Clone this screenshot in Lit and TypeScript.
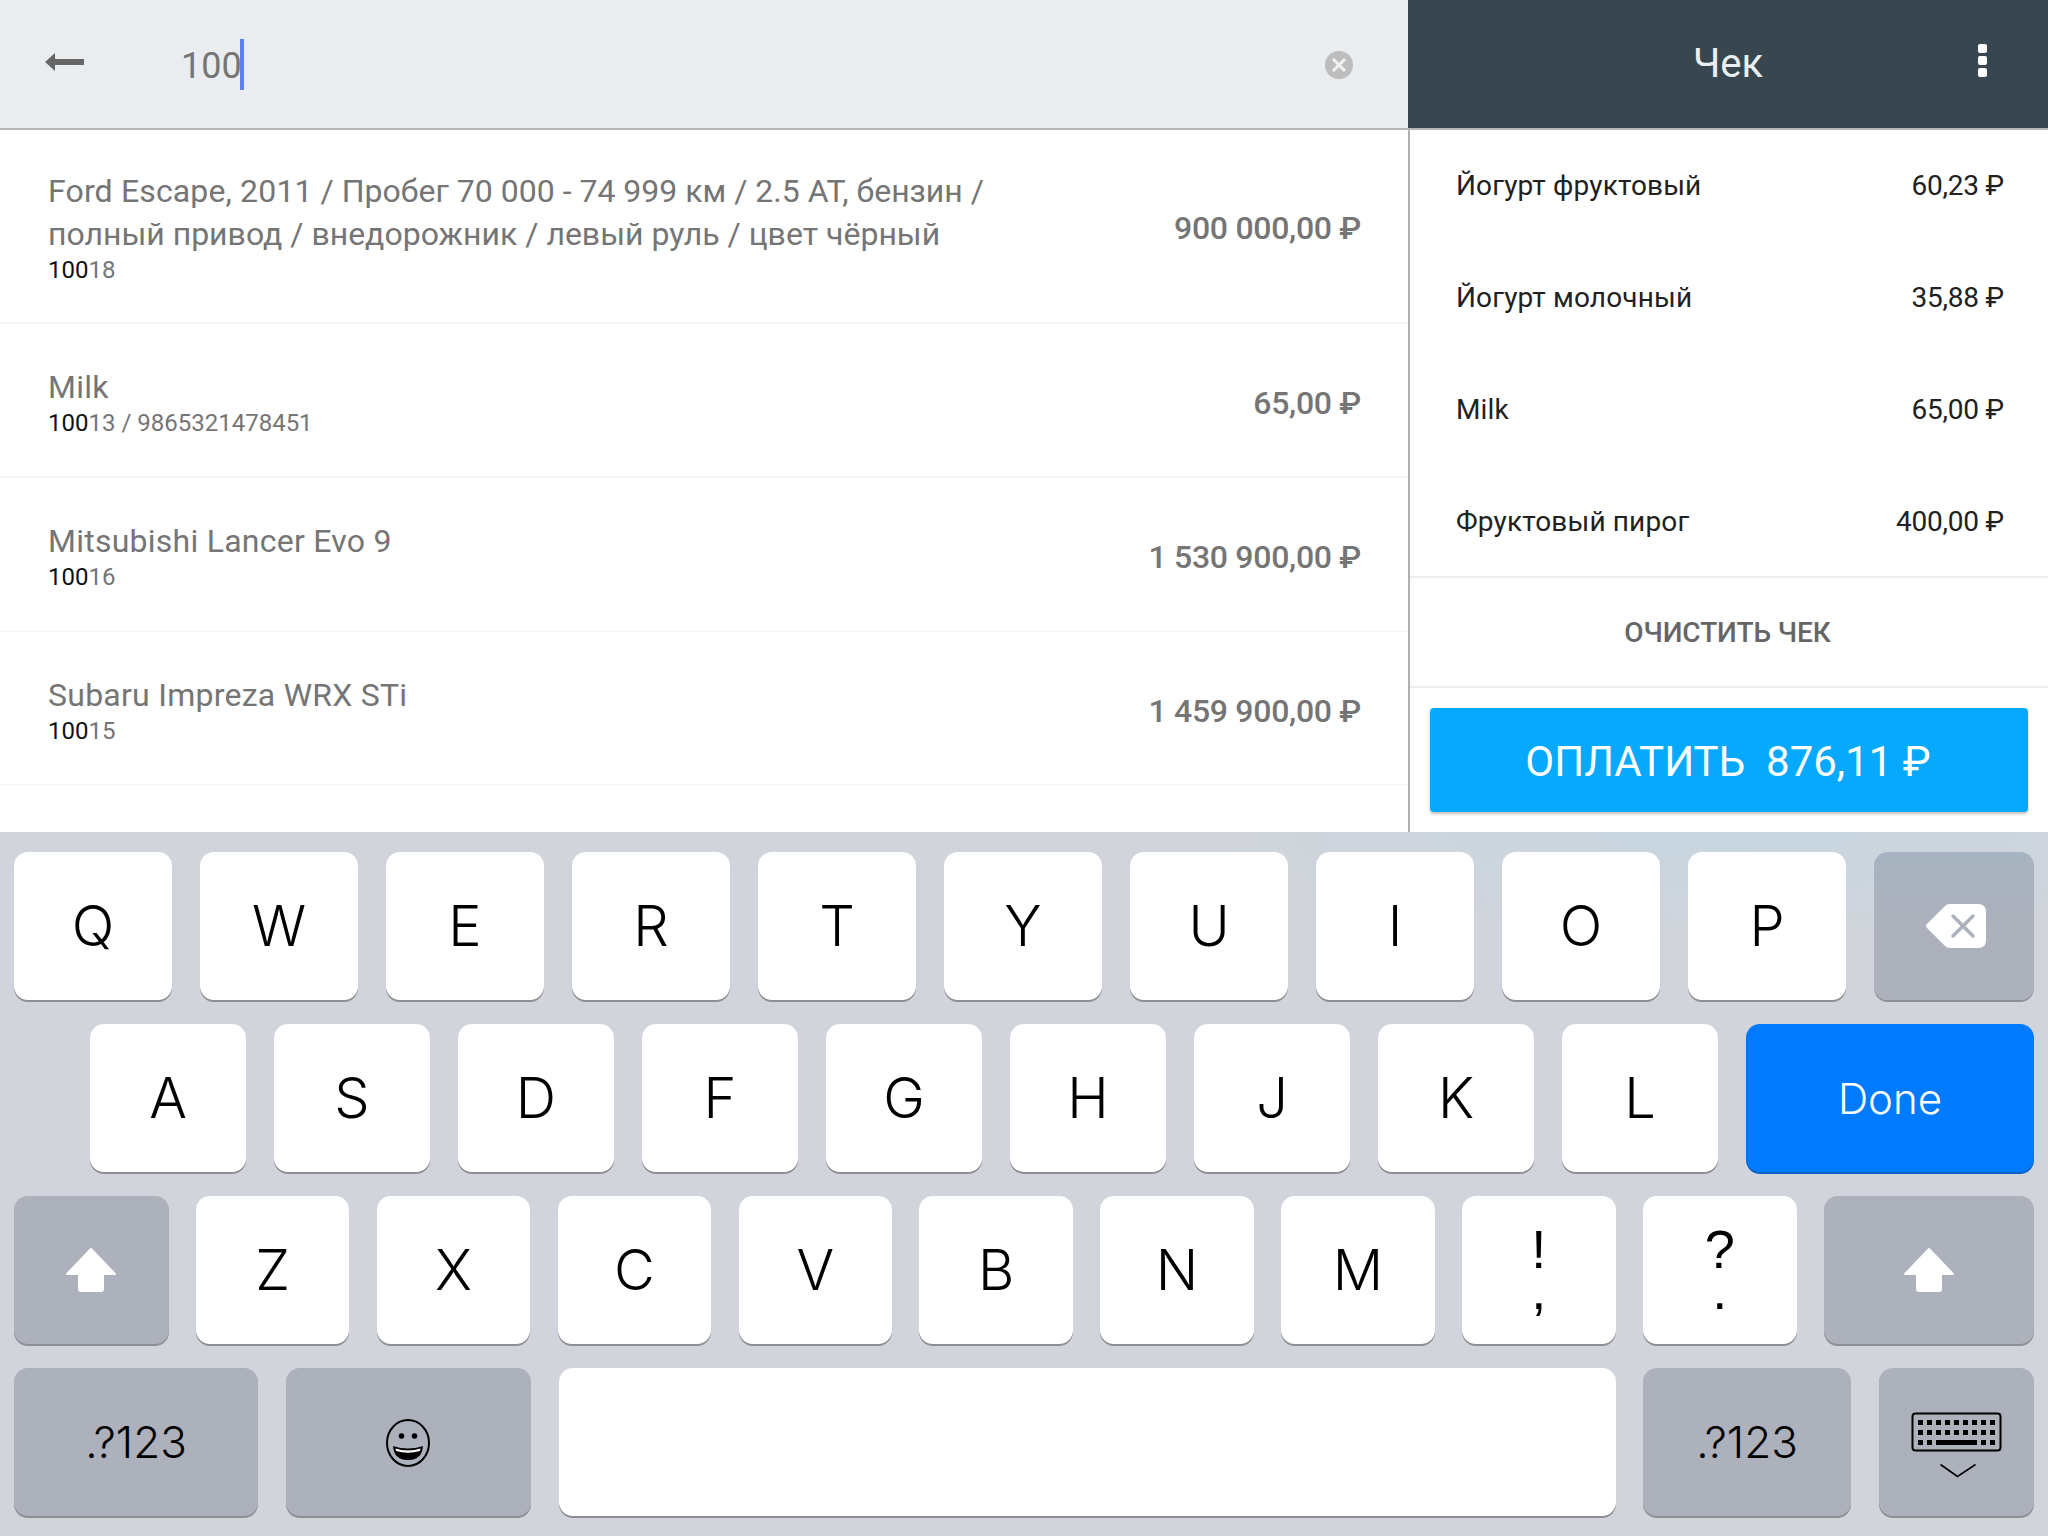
import { LitElement, html, css, svg } from 'lit';
import { customElement } from 'lit/decorators.js';

const products = [
  { lead: 'Ford Escape, 2011', name: ' / Пробег 70 000 - 74 999 км / 2.5 АТ, бензин /', rest: 'полный привод / внедорожник / левый руль / цвет чёрный', code: '18', price: '900 000,00 ₽', tall: true },
  { name: 'Milk', code: '13 / 9865321478451', price: '65,00 ₽', latin: true },
  { name: 'Mitsubishi Lancer Evo 9', code: '16', price: '1 530 900,00 ₽', latin: true },
  { name: 'Subaru Impreza WRX STi', code: '15', price: '1 459 900,00 ₽', latin: true },
];

const receipt = [
  ['Йогурт фруктовый', '60,23 ₽'],
  ['Йогурт молочный', '35,88 ₽'],
  ['Milk', '65,00 ₽'],
  ['Фруктовый пирог', '400,00 ₽'],
];

const shiftIcon = html`<svg width="52" height="46" viewBox="0 0 52 46">
  <path fill="#fff" stroke="#fff" stroke-width="2" stroke-linejoin="round" d="M26 2 L50 27 H38 V42 Q38 44 36 44 H16 Q14 44 14 42 V27 H2 Z" />
</svg>`;

const backspaceIcon = html`<svg class="backspace" width="60" height="44" viewBox="0 0 60 44">
  <path fill="#fff" d="M1 20 L19 2 Q21 0 24 0 H52 Q60 0 60 8 V36 Q60 44 52 44 H24 Q21 44 19 42 L1 24 Q-1 22 1 20 Z" />
  <path fill="none" stroke="#acb1bc" stroke-width="3.5" stroke-linecap="round" d="M27 12 L47 32 M47 12 L27 32" />
</svg>`;

const emojiIcon = html`<svg class="emoji" width="46" height="50" viewBox="-23 -25 46 50">
  <ellipse cx="0" cy="0" rx="21" ry="23" fill="none" stroke="#000" stroke-width="2" />
  <circle cx="-6.5" cy="-7" r="2.8" />
  <circle cx="6.5" cy="-7" r="2.8" />
  <path d="M-15 3 Q0 8 15 3 Q14 17 0 17 Q-14 17 -15 3 Z" />
  <path fill="#fff" d="M-12.5 5.5 Q0 9.5 12.5 5.5 L12 8 Q0 11.5 -12 8 Z" />
</svg>`;

// keyboard glyph: three rows of square keys over a small chevron
const keyDots = [11, 20, 29, 38, 47, 56, 65, 74, 83];
const hideIcon = html`<svg class="hide" width="100" height="80" viewBox="0 0 100 80">
  <rect x="5.5" y="11.5" width="88" height="37" rx="3" fill="none" stroke="#000" stroke-width="2" />
  ${[18, 28].map((y) => keyDots.map((x) => svg`<rect x="${x}" y="${y}" width="5" height="5" />`))}
  <rect x="11" y="38" width="5" height="5" />
  <rect x="20" y="38" width="5" height="5" />
  <rect x="29" y="38" width="41" height="5" />
  <rect x="74" y="38" width="5" height="5" />
  <rect x="83" y="38" width="5" height="5" />
  <path fill="none" stroke="#000" stroke-width="1.6" d="M33.5 62.5 L50.5 74.5 L68.5 62.5" />
</svg>`;

@customElement('app-root')
export class AppRoot extends LitElement {
  static styles = css`
    :host {
      display: block;
      width: 2048px;
      height: 1536px;
      overflow: hidden;
      background: #fff;
      font-family: Roboto, sans-serif;
    }

    .top {
      display: grid;
      grid-template-columns: 1408px 640px;
      height: 832px;
    }

    .search {
      display: flex;
      align-items: center;
      box-sizing: border-box;
      height: 130px;
      padding: 0 55px 0 45px;
      background: #e9edf0;
      border-bottom: 2px solid #b4b6b8;
    }

    .search .back {
      flex: none;
      margin-top: -4px;
    }

    .search .cancel {
      margin-top: 2px;
    }

    .query {
      display: flex;
      align-items: center;
      flex: 1;
      margin-left: 96px;
      font-size: 36px;
      color: #757575;
    }

    .query span {
      padding-top: 4px;
    }

    .query .caret {
      width: 4px;
      height: 51px;
      margin-left: -2px;
      padding: 0;
      background: #5f80ea;
    }

    .row {
      display: flex;
      align-items: center;
      justify-content: space-between;
      box-sizing: border-box;
      height: 154px;
      padding: 4px 47px 0 48px;
      border-bottom: 2px solid #f6f6f6;
    }

    .row.tall {
      height: 194px;
      padding-top: 2px;
    }

    .name {
      font-size: 32px;
      line-height: 43px;
      color: #757575;
    }

    .name.latin {
      letter-spacing: 0.25px;
    }

    .lead {
      letter-spacing: 0.15px;
    }

    .code {
      margin-top: -1px;
      font-size: 24px;
      line-height: 30px;
      color: #757575;
    }

    .code b {
      font-weight: 400;
      color: #111;
    }

    .price {
      flex: none;
      margin-top: 2px;
      font-size: 32px;
      font-weight: 500;
      letter-spacing: -0.3px;
      color: #757575;
    }

    .receipt {
      display: flex;
      flex-direction: column;
      border-left: 2px solid #b0b0b0;
      margin-top: 128px;
      position: relative;
    }

    .receipt-head {
      position: absolute;
      top: -128px;
      left: -2px;
      right: 0;
      display: flex;
      align-items: center;
      justify-content: center;
      box-sizing: border-box;
      height: 130px;
      padding-bottom: 2px;
      background: #38474f;
      border-bottom: 2px solid #b4b6b8;
      font-size: 40px;
      font-weight: 400;
      color: #eceff1;
    }

    .dots {
      position: absolute;
      left: 570px;
      top: 44px;
      display: flex;
      flex-direction: column;
      gap: 3.5px;
    }

    .dots i {
      width: 8.5px;
      height: 8.5px;
      border-radius: 2px;
      background: #fff;
    }

    .lines {
      box-sizing: border-box;
      height: 450px;
      padding-top: 1px;
      border-bottom: 2px solid #eeeeee;
    }

    .line {
      display: flex;
      align-items: center;
      justify-content: space-between;
      height: 112px;
      padding: 0 44px 0 46px;
      font-size: 28px;
      letter-spacing: 0.15px;
      color: #212121;
    }

    .line .sum {
      letter-spacing: -0.2px;
    }

    .clear {
      display: flex;
      align-items: center;
      justify-content: center;
      box-sizing: border-box;
      height: 110px;
      padding-right: 3px;
      border-bottom: 2px solid #eeeeee;
      font-size: 28px;
      font-weight: 500;
      letter-spacing: -0.1px;
      color: #666;
    }

    .pay {
      display: flex;
      align-items: center;
      justify-content: center;
      box-sizing: border-box;
      height: 104px;
      margin: 20px 20px 0;
      padding: 2px 2px 0 0;
      border-radius: 4px;
      background: #06a9fb;
      box-shadow: 0 2px 3px rgba(0, 0, 0, 0.25);
      font-size: 42px;
      white-space: pre;
      color: #fff;
    }

    .keyboard {
      display: flex;
      flex-direction: column;
      gap: 24px;
      box-sizing: border-box;
      height: 704px;
      padding-top: 20px;
      background: radial-gradient(ellipse 520px 110px at 1730px 0, #c7d6e0, rgba(199, 214, 224, 0)), #d1d4db;
      font-family: Inter, 'Liberation Sans', sans-serif;
      font-weight: 330;
    }

    .keys {
      display: grid;
      height: 148px;
      column-gap: 28px;
    }

    .r1 {
      grid-template-columns: repeat(10, 158px) 160px;
      padding-left: 14px;
    }

    .r2 {
      grid-template-columns: repeat(9, 156px) 288px;
      padding-left: 90px;
    }

    .r3 {
      grid-template-columns: 154.5px repeat(9, 153.5px) 210px;
      column-gap: 27.4px;
      padding-left: 14px;
    }

    .r4 {
      grid-template-columns: 244px 245.5px 1057px 208px 155.5px;
      column-gap: 27.5px;
      padding-left: 14px;
    }

    .key {
      display: flex;
      flex-direction: column;
      align-items: center;
      justify-content: center;
      border-radius: 14px;
      background: #fff;
      box-shadow: 0 2px 0 #8e8e93;
      font-size: 56px;
      color: #000;
    }

    .key.dark {
      background: #acb1bc;
      font-size: 44px;
      font-weight: 300;
    }

    .key.del {
      background: linear-gradient(#a6b3c0, #acb1bc 50%);
    }

    .key.done {
      background: #007aff;
      box-shadow: 0 2px 0 #0a63c4;
      font-size: 42px;
      font-weight: 300;
      color: #fff;
    }

    .key.punct {
      font-family: 'Liberation Sans', Arial, sans-serif;
      font-size: 54px;
      font-weight: 400;
      line-height: 41px;
    }

    .backspace {
      margin-left: 4px;
    }

    .emoji {
      margin-top: 2px;
    }

    .hide {
      margin-left: 2px;
    }
  `;

  renderKeys(letters: string) {
    return letters.split('').map((l) => html`<div class="key">${l}</div>`);
  }

  render() {
    return html`
      <div class="top">
        <div>
          <div class="search">
            <svg class="back" width="40" height="18" viewBox="0 0 40 18">
              <path fill="#666" d="M0 9 L10 0 V6 H39 V12 H10 V18 Z" />
            </svg>
            <div class="query"><span>100</span><span class="caret"></span></div>
            <svg class="cancel" width="28" height="28" viewBox="0 0 28 28">
              <circle cx="14" cy="14" r="14" fill="#bdbdbd" />
              <path stroke="#f2f2f2" stroke-width="3" d="M8 8 L20 20 M20 8 L8 20" />
            </svg>
          </div>
          ${products.map(
            (p) => html`
              <div class="row ${p.tall ? 'tall' : ''}">
                <div>
                  <div class="name ${p.latin ? 'latin' : ''}">
                    <span class="lead">${p.lead}</span>${p.name}${p.rest ? html`<br />${p.rest}` : ''}
                  </div>
                  <div class="code"><b>100</b>${p.code}</div>
                </div>
                <div class="price">${p.price}</div>
              </div>
            `
          )}
        </div>
        <div class="receipt">
          <div class="receipt-head">
            Чек
            <div class="dots"><i></i><i></i><i></i></div>
          </div>
          <div class="lines">
            ${receipt.map(
              ([name, sum]) => html`<div class="line"><span>${name}</span><span class="sum">${sum}</span></div>`
            )}
          </div>
          <div class="clear">ОЧИСТИТЬ ЧЕК</div>
          <div class="pay">ОПЛАТИТЬ  876,11 ₽</div>
        </div>
      </div>
      <div class="keyboard">
        <div class="keys r1">
          ${this.renderKeys('QWERTYUIOP')}
          <div class="key dark del">${backspaceIcon}</div>
        </div>
        <div class="keys r2">
          ${this.renderKeys('ASDFGHJKL')}
          <div class="key done">Done</div>
        </div>
        <div class="keys r3">
          <div class="key dark">${shiftIcon}</div>
          ${this.renderKeys('ZXCVBNM')}
          <div class="key punct"><span>!</span><span>,</span></div>
          <div class="key punct"><span>?</span><span>.</span></div>
          <div class="key dark">${shiftIcon}</div>
        </div>
        <div class="keys r4">
          <div class="key dark">.?123</div>
          <div class="key dark">${emojiIcon}</div>
          <div class="key"></div>
          <div class="key dark">.?123</div>
          <div class="key dark">${hideIcon}</div>
        </div>
      </div>
    `;
  }
}
